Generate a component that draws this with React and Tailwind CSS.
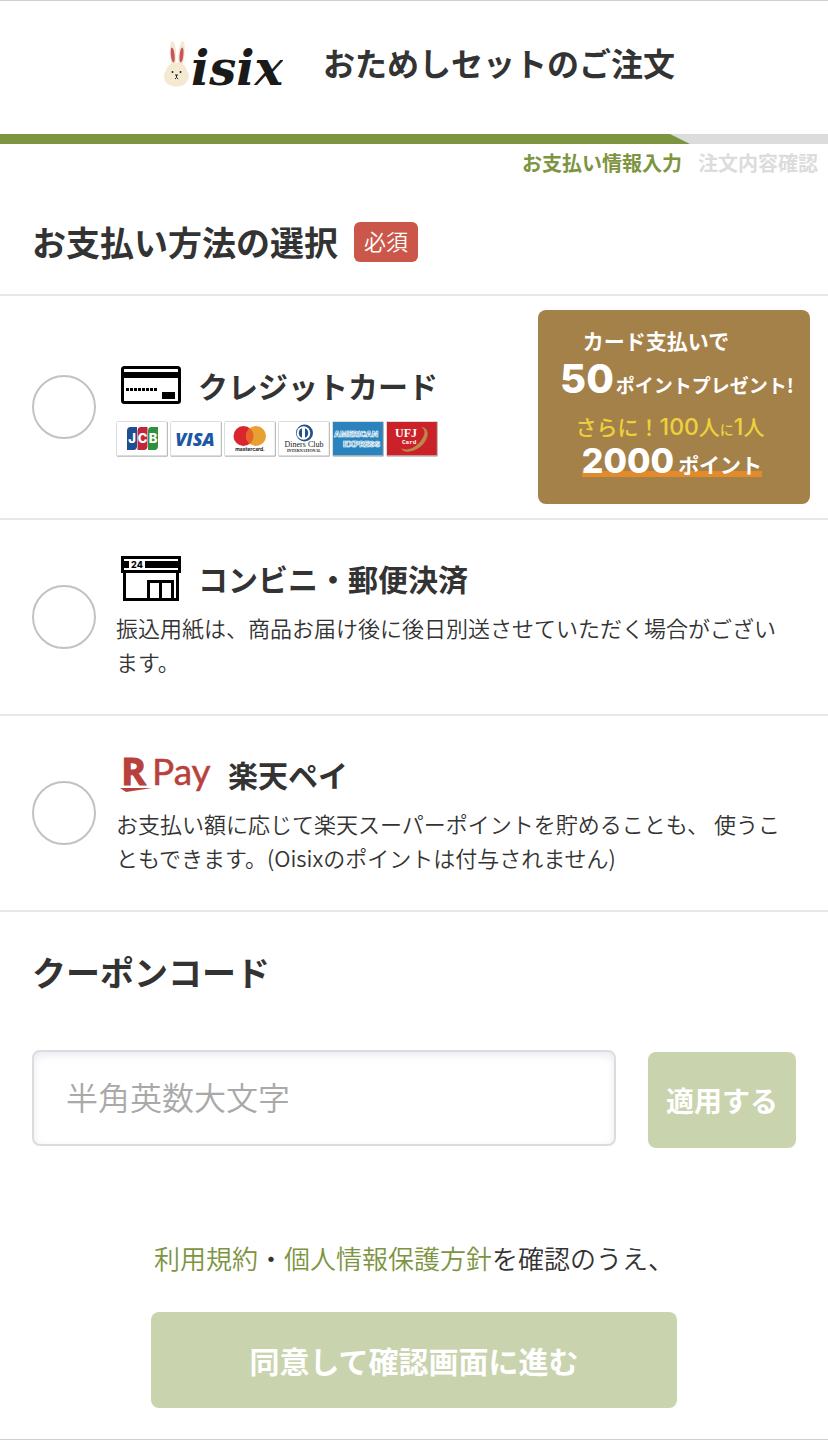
import { useState } from 'react'

const CARD_BRANDS = [
  { name: 'JCB', Logo: JcbLogo },
  { name: 'VISA', Logo: VisaLogo },
  { name: 'mastercard', Logo: MastercardLogo },
  { name: 'Diners Club', Logo: DinersLogo },
  { name: 'American Express', Logo: AmexLogo },
  { name: 'UFJ Card', Logo: UfjLogo },
]

function BrandFrame({ fill = '#fff', children }) {
  return (
    <svg className="w-[52px] h-9" viewBox="0 0 52 36" aria-hidden="true">
      <rect x="0.5" y="0.5" width="51" height="34.5" rx="1" fill={fill} stroke="#dcdcdc" />
      <path d="M1 35.2H51.3V1" fill="none" stroke="#b5b5b5" strokeWidth="1" />
      {children}
    </svg>
  )
}

function JcbLogo() {
  const bars = [
    { x: 11, color: '#1f4f93', letter: 'J' },
    { x: 21.5, color: '#c0283a', letter: 'C' },
    { x: 32, color: '#2f9040', letter: 'B' },
  ]
  return (
    <BrandFrame>
      {bars.map(({ x, color }) => (
        <path key={x} d={`M${x + 3.5} 6h6.500v19q0 4-3.500 4h-6.500v-19q0-4 3.500-4z`} fill={color} />
      ))}
      {bars.map(({ x, letter }) => (
        <text key={letter} x={x + 5} y="22" textAnchor="middle" fontFamily="Inter, sans-serif" fontSize="13" fontWeight="800" fill="#fff">{letter}</text>
      ))}
    </BrandFrame>
  )
}

function VisaLogo() {
  return (
    <BrandFrame>
      <text x="25" y="24.5" textAnchor="middle" fontFamily="'Open Sans', sans-serif" fontSize="18" fontWeight="800" fontStyle="italic" fill="#1c57a5">VISA</text>
    </BrandFrame>
  )
}

function MastercardLogo() {
  return (
    <BrandFrame>
      <circle cx="19.5" cy="15" r="10" fill="#d8262c" />
      <circle cx="32" cy="15" r="10" fill="#e9a033" />
      <path d="M25.75 7.2a10 10 0 0 1 0 15.6a10 10 0 0 1 0-15.6z" fill="#e8622a" />
      <text x="26" y="30" textAnchor="middle" fontFamily="Inter, sans-serif" fontSize="5" fontWeight="700" fill="#222">mastercard.</text>
    </BrandFrame>
  )
}

function DinersLogo() {
  return (
    <BrandFrame>
      <circle cx="26.5" cy="12" r="8.5" fill="#24518d" />
      <circle cx="25.5" cy="12" r="6.8" fill="#fff" />
      <path d="M24 7.2a5.2 5.2 0 0 0 0 9.6zM27 7.2a5.2 5.2 0 0 1 0 9.6z" fill="#24518d" />
      <text x="26" y="26" textAnchor="middle" fontFamily="'Liberation Serif', serif" fontSize="8" fontWeight="400" fill="#222">Diners Club</text>
      <text x="26" y="31" textAnchor="middle" fontFamily="'Liberation Serif', serif" fontSize="4" fontWeight="700" fill="#222">INTERNATIONAL</text>
    </BrandFrame>
  )
}

function AmexLogo() {
  return (
    <BrandFrame fill="#2a83bd">
      <g fontFamily="Inter, sans-serif" fontSize="8" fontWeight="800" fill="#2a83bd" stroke="#fff" strokeWidth="0.7">
        <text x="2" y="16">AMERICAN</text>
        <text x="11" y="26">EXPRESS</text>
      </g>
    </BrandFrame>
  )
}

function UfjLogo() {
  return (
    <BrandFrame fill="#cb2229">
      <path d="M35 6c10 1 8 13-1 20c-8 6-17 6-19 1c5 3 12 1 17-4c7-7 9-14 3-17z" fill="#b98a4c" />
      <text x="9" y="16" fontFamily="'Liberation Serif', serif" fontSize="12" fontWeight="700" fill="#fff">UFJ</text>
      <text x="16" y="23" fontFamily="'Liberation Mono', monospace" fontSize="6" fontWeight="700" fill="#fff">Card</text>
    </BrandFrame>
  )
}

function OisixLogo() {
  return (
    <svg className="w-[130px] h-[70px] shrink-0" viewBox="0 0 130 70" role="img" aria-label="Oisix">
      <g fill="#f4ead2">
        <ellipse cx="20" cy="27" rx="3.2" ry="13" transform="rotate(-3 20 27)" />
        <ellipse cx="28.500" cy="27" rx="3.2" ry="13" transform="rotate(5 28.500 27)" />
        <path d="M24 35.500c5.500 0 9 3 10 8c2 3 2.500 6 1 9c-2 5-6 7-11.500 7s-10.500-2-12-7c-1-3-.5-6 1.500-9c1-5 5-8 11-8z" />
      </g>
      <g fill="#c9535c">
        <ellipse cx="19.700" cy="28" rx="1.900" ry="7.500" transform="rotate(-6 19.700 28)" />
        <ellipse cx="28.500" cy="28" rx="1.900" ry="7.500" transform="rotate(6 28.500 28)" />
      </g>
      <circle cx="19.500" cy="45" r="1" fill="#222" />
      <circle cx="27.500" cy="45" r="1" fill="#222" />
      <path d="M22 48h3M23.500 48v2.500M22 52l1.500-1.500l1.700 1.500" fill="none" stroke="#222" strokeWidth="1" />
      <text x="38" y="58" fontFamily="'DejaVu Serif', serif" fontSize="48" fontWeight="700" fontStyle="italic" fill="#1a1a1a">isix</text>
    </svg>
  )
}

function CreditCardIcon() {
  return (
    <svg className="w-[66px] h-12 shrink-0" viewBox="0 0 66 48" aria-hidden="true">
      <rect x="6.500" y="6.500" width="57" height="35" rx="2" fill="#fff" stroke="#000" strokeWidth="3" />
      <path d="M6 11h58v6H6z" />
      <path d="M10 28.500h32" stroke="#000" strokeWidth="3" strokeDasharray="3 1" />
      <path d="M46 31h13v7H46z" />
    </svg>
  )
}

function StoreIcon() {
  return (
    <svg className="w-[66px] h-12 shrink-0" viewBox="0 0 66 48" aria-hidden="true">
      <g fill="none" stroke="#000" strokeWidth="3">
        <path d="M6.500 3.500h57v14h-57z" />
        <path d="M8.500 17.500v28h53v-28" />
        <path d="M32.500 45V27.500h24V45M44.500 27v18" />
      </g>
      <path d="M8 7h54v7H8z" />
      <path d="M13 5h16v11H13z" fill="#fff" />
      <text x="21" y="14" textAnchor="middle" fontFamily="Inter, sans-serif" fontSize="9" fontWeight="800">24</text>
    </svg>
  )
}

function RakutenPayIcon() {
  return (
    <svg className="w-24 h-16 shrink-0" viewBox="0 0 96 64" fill="#b9413c" role="img" aria-label="R Pay">
      <text x="5" y="43" fontFamily="'Open Sans', sans-serif" fontSize="38" fontWeight="700" stroke="#b9413c" strokeWidth="1">R</text>
      <path d="M4 46h32l-26 4z" />
      <text x="36" y="43" fontFamily="Lato, sans-serif" fontSize="37" fontWeight="400" stroke="#b9413c" strokeWidth="0.500">Pay</text>
    </svg>
  )
}

function ProgressBar() {
  return (
    <div>
      <div className="h-2.5 bg-[#dcdcdc]">
        <div className="h-full w-5/6 bg-[#7d9440] [clip-path:polygon(0_0,calc(100%-20px)_0,100%_100%,0_100%)]" />
      </div>
      <ol className="flex justify-end gap-4 pr-2.5 pt-1 text-xl leading-[30px] font-bold">
        <li className="text-[#7d9440]" aria-current="step">お支払い情報入力</li>
        <li className="text-[#dcdcdc]">注文内容確認</li>
      </ol>
    </div>
  )
}

function PointBanner() {
  return (
    <div className="w-[272px] h-[194px] shrink-0 rounded-lg bg-[#a5814a] text-white font-bold flex flex-col items-center pt-3.5 whitespace-nowrap">
      <p className="text-[21px] leading-8 pr-9">カード支払いで</p>
      <p className="flex items-baseline gap-0.5 pl-1.5 leading-[46px]">
        <span className="font-[Inter] text-[40px] font-extrabold">50</span>
        <span className="text-[19px] leading-[46px]">ポイントプレゼント!</span>
      </p>
      <p className="text-[21px] leading-9 font-medium text-[#ecd13c] pr-2">
        さらに！<span className="font-[Inter] text-[23px]">100</span>人<span className="text-sm">に</span><span className="font-[Inter] text-[23px]">1</span>人
      </p>
      <p className="flex items-baseline gap-1 h-8 leading-8 mr-1 bg-linear-to-t from-[#e38b2b] from-[6px] to-transparent to-[6px]">
        <span className="font-[Inter] text-[34px] font-extrabold">2000</span>
        <span className="text-[21px] leading-8">ポイント</span>
      </p>
    </div>
  )
}

function PaymentOption({ value, selected, onSelect, icon, title, children, aside, className }) {
  return (
    <label className={`flex items-center border-b-2 border-[#e8e8e8] cursor-pointer ${className}`}>
      <input
        type="radio"
        name="payment"
        value={value}
        checked={selected}
        onChange={() => onSelect(value)}
        className="appearance-none shrink-0 w-16 h-16 mr-5 rounded-full border-2 border-[#c2c2c2] bg-white checked:border-[20px] checked:border-[#7d9440]"
      />
      <span className="flex-1 min-w-0">
        <span className="flex items-center gap-4 h-12 text-3xl font-bold">
          {icon}
          {title}
        </span>
        {children}
      </span>
      {aside}
    </label>
  )
}

export default function App() {
  const [payment, setPayment] = useState(null)
  const [coupon, setCoupon] = useState('')

  return (
    <div className="bg-white text-[#333] border-y border-[#cfcfcf] font-['Noto_Sans_CJK_JP',sans-serif]">
      <header className="flex items-center justify-center gap-10 h-[133px] pb-3">
        <OisixLogo />
        <h1 className="text-[32px] leading-10 font-bold">おためしセットのご注文</h1>
      </header>

      <ProgressBar />

      <main>
        <div className="flex items-center gap-4 px-8 pt-11 pb-8 border-b-2 border-[#e8e8e8]">
          <h2 className="text-[34px] leading-10 font-bold">お支払い方法の選択</h2>
          <span className="h-10 px-2.5 rounded-md bg-[#cb574a] text-white text-[22px] leading-9 font-[350]">必須</span>
        </div>

        <PaymentOption
          value="card"
          selected={payment === 'card'}
          onSelect={setPayment}
          icon={<CreditCardIcon />}
          title="クレジットカード"
          aside={<PointBanner />}
          className="pl-8 pr-[18px] py-3.5"
        >
          <span className="flex gap-0.5 mt-3 -mb-1">
            {CARD_BRANDS.map(({ name, Logo }) => <Logo key={name} />)}
          </span>
        </PaymentOption>

        <PaymentOption
          value="store"
          selected={payment === 'store'}
          onSelect={setPayment}
          icon={<StoreIcon />}
          title="コンビニ・郵便決済"
          className="px-8 py-[34px]"
        >
          <span className="block mt-2 mb-0.5 text-[22px] leading-[34px] font-[350]">
            振込用紙は、商品お届け後に後日別送させていただく場合がございます。
          </span>
        </PaymentOption>

        <PaymentOption
          value="rakuten"
          selected={payment === 'rakuten'}
          onSelect={setPayment}
          icon={<RakutenPayIcon />}
          title="楽天ペイ"
          className="px-8 py-[34px]"
        >
          <span className="block mt-2 mb-0.5 text-[22px] leading-[34px] font-[350]">
            お支払い額に応じて楽天スーパーポイントを貯めることも、 使うこともできます。(Oisixのポイントは付与されません)
          </span>
        </PaymentOption>

        <form className="px-8 pt-10" onSubmit={e => e.preventDefault()}>
          <label htmlFor="coupon" className="block text-[34px] leading-10 font-bold">クーポンコード</label>
          <div className="flex items-start gap-8 mt-[58px]">
            <input
              id="coupon"
              type="text"
              value={coupon}
              onChange={e => setCoupon(e.target.value)}
              placeholder="半角英数大文字"
              className="flex-1 min-w-0 h-24 px-8 pb-1 rounded-lg border-2 border-[#dcdcdc] text-[32px] font-[350] placeholder:text-[#a9a9a9] shadow-[inset_0_3px_8px_#e6e9f0]"
            />
            <button type="submit" className="w-[148px] h-24 mt-0.5 rounded-lg bg-[#c9d3ae] text-white text-[28px] font-bold">
              適用する
            </button>
          </div>
        </form>

        <div className="pt-[90px] pb-[31px] px-8 flex flex-col items-center">
          <p className="text-[26px] leading-10 font-[350]">
            <a href="#terms" className="text-[#7d9440]">利用規約</a>・<a href="#privacy" className="text-[#7d9440]">個人情報保護方針</a>を確認のうえ、
          </p>
          <button type="button" className="mt-[34px] w-[526px] max-w-full h-24 rounded-lg bg-[#c9d3ae] text-white text-3xl font-bold">
            同意して確認画面に進む
          </button>
        </div>
      </main>
    </div>
  )
}
